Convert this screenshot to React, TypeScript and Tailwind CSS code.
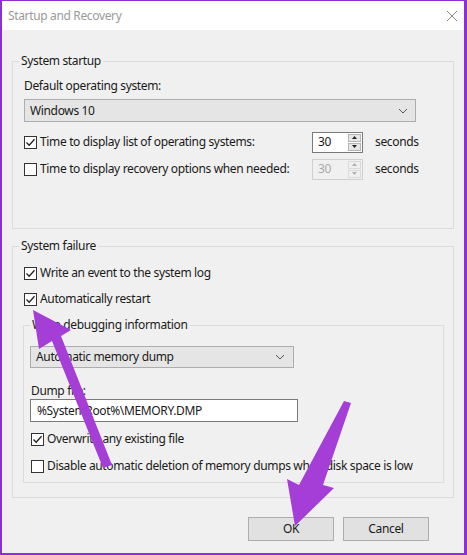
import React from "react";

const font = { fontFamily: '"Noto Sans", "Open Sans", sans-serif' };

function Check({ checked }: { checked?: boolean }) {
  return (
    <div className="w-[13px] h-[13px] border border-[#333] bg-white flex items-center justify-center shrink-0">
      {checked && (
        <svg width="11" height="11" viewBox="0 0 11 11">
          <path d="M1.5 5.5 L4.2 8.3 L9.5 2.2" fill="none" stroke="#222" strokeWidth="1.3" />
        </svg>
      )}
    </div>
  );
}

function Chevron() {
  return (
    <svg width="10" height="6" viewBox="0 0 10 6">
      <path d="M1 1 L5 5 L9 1" fill="none" stroke="#555" strokeWidth="1" />
    </svg>
  );
}

function Spinner({ disabled }: { disabled?: boolean }) {
  return (
    <div
      className={`w-[51px] h-[21px] border flex items-center justify-between pl-[5px] pr-[1px] shrink-0 ${
        disabled ? "border-[#cfcfcf] bg-[#f0f0f0] text-[#a8a8a8]" : "border-[#7a7a7a] bg-white text-[#1a1a1a]"
      }`}
    >
      <span>30</span>
      <div className="flex flex-col gap-[1px]">
        {[0, 1].map((i) => (
          <div
            key={i}
            className={`w-[13px] h-[8px] flex items-center justify-center border ${
              disabled ? "border-[#dadada] bg-[#f0f0f0]" : "border-[#b5b5b5] bg-[#e6e6e6]"
            }`}
          >
            <svg width="5" height="3" viewBox="0 0 5 3">
              <path d={i === 0 ? "M0 3 L2.5 0 L5 3 Z" : "M0 0 L2.5 3 L5 0 Z"} fill={disabled ? "#b0b0b0" : "#222"} />
            </svg>
          </div>
        ))}
      </div>
    </div>
  );
}

function Group({
  title,
  className,
  children,
}: {
  title: string;
  className?: string;
  children: React.ReactNode;
}) {
  return (
    <div className={`relative border border-[#dcdcdc] ${className ?? ""}`}>
      <span className="absolute -top-[10px] left-[6px] px-[2px] bg-[#f0f0f0] leading-[18px] whitespace-nowrap">{title}</span>
      {children}
    </div>
  );
}

export default function App() {
  return (
    <div
      className="w-[467px] h-[555px] border-t border-l-2 border-r-[3px] border-b-2 border-[#8b2fd6] bg-[#f0f0f0] flex flex-col text-[12px] tracking-[-0.35px] whitespace-nowrap text-[#1a1a1a] relative overflow-hidden"
      style={font}
    >
      <div className="h-[29px] bg-white flex items-center justify-between pl-[6px] pr-[4px] shrink-0">
        <span className="text-[#9a9a9a] text-[12px]">Startup and Recovery</span>
        <svg width="12" height="12" viewBox="0 0 12 12" className="mr-[2px]">
          <path d="M1 1 L11 11 M11 1 L1 11" stroke="#888" strokeWidth="1" />
        </svg>
      </div>

      <div className="flex flex-col px-[10px]">
        <Group title="System startup" className="mt-[31px] h-[168px] px-[11px] pt-[15px]">
          <div className="leading-[18px]">Default operating system:</div>
          <div className="mt-[4px] w-[392px] h-[23px] border border-[#adadad] bg-[#e5e5e5] flex items-center justify-between pl-[5px] pr-[7px]">
            <span>Windows 10</span>
            <Chevron />
          </div>
          <div className="mt-[9px] flex items-center h-[22px]">
            <Check checked />
            <span className="ml-[3px] w-[272px]">Time to display list of operating systems:</span>
            <Spinner />
            <span className="ml-[12px]">seconds</span>
          </div>
          <div className="mt-[5px] flex items-center h-[22px]">
            <Check />
            <span className="ml-[3px] w-[272px]">Time to display recovery options when needed:</span>
            <Spinner disabled />
            <span className="ml-[12px]">seconds</span>
          </div>
        </Group>

        <Group title="System failure" className="mt-[17px] h-[252px] px-[11px] pt-[17px]">
          <div className="flex items-center h-[18px]">
            <Check checked />
            <span className="ml-[3px]">Write an event to the system log</span>
          </div>
          <div className="mt-[8px] flex items-center h-[18px]">
            <Check checked />
            <span className="ml-[3px]">Automatically restart</span>
          </div>
          <Group title="Write debugging information" className="mt-[17px] -ml-[1px] w-[421px] h-[158px] px-[6px] pt-[20px]">
            <div className="w-[264px] h-[22px] border border-[#adadad] bg-[#e5e5e5] flex items-center justify-between pl-[5px] pr-[8px]">
              <span>Automatic memory dump</span>
              <Chevron />
            </div>
            <div className="mt-[14px] leading-[18px] pl-[1px]">Dump file:</div>
            <div className="-mt-[1px] w-[268px] h-[23px] border border-[#7a7a7a] bg-white flex items-center pl-[6px]">
              %SystemRoot%\MEMORY.DMP
            </div>
            <div className="mt-[8px] flex items-center h-[18px] pl-[1px]">
              <Check checked />
              <span className="ml-[3px]">Overwrite any existing file</span>
            </div>
            <div className="mt-[9px] flex items-center h-[18px] pl-[1px]">
              <Check />
              <span className="ml-[3px]">Disable automatic deletion of memory dumps when disk space is low</span>
            </div>
          </Group>
        </Group>

        <div className="mt-[19px] flex justify-end gap-[9px] pr-[25px]">
          <button className="w-[86px] h-[24px] border border-[#adadad] bg-[#e1e1e1]">OK</button>
          <button className="w-[86px] h-[24px] border border-[#adadad] bg-[#e1e1e1]">Cancel</button>
        </div>
      </div>

      <svg className="absolute left-0 top-0 pointer-events-none" width="467" height="555" viewBox="0 0 467 555">
        <path
          d="M31 309 L69 329 L59 335 L110 464 L101 467 L50 340 L37 348 Z"
          fill="#a53ed6"
        />
        <path
          d="M349 402 L321 484 L332 487 L293 525 L285 478 L297 484 L342 400 Z"
          fill="#a53ed6"
        />
      </svg>
    </div>
  );
}
